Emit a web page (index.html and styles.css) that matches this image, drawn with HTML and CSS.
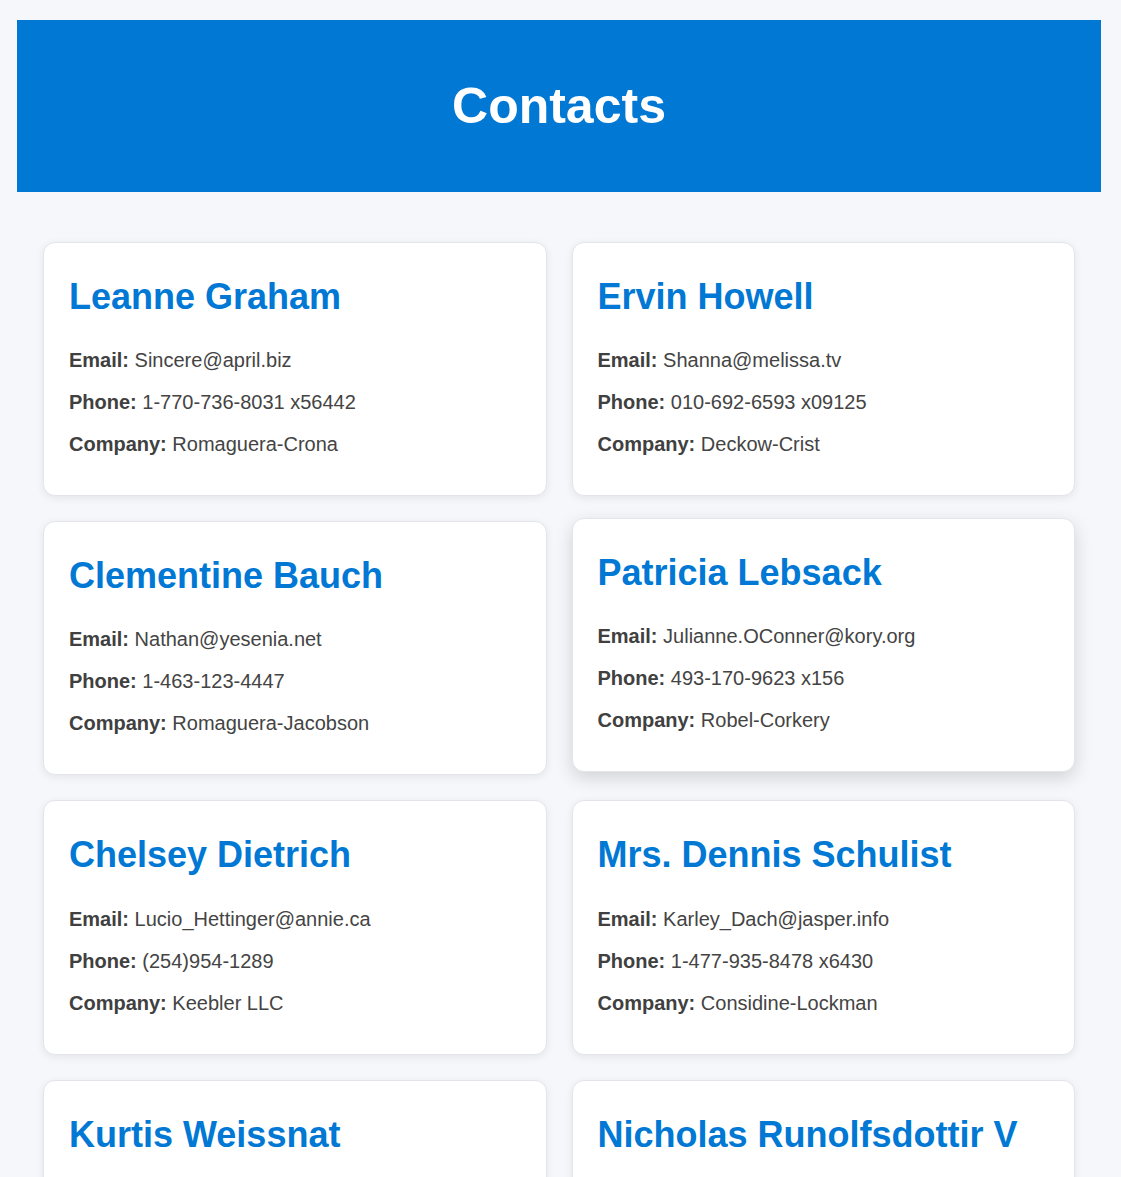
FILE: index.html
```html
<!DOCTYPE html>
<html lang="en">
<head>
<meta charset="utf-8">
<title>Contacts</title>
<link rel="stylesheet" href="styles.css">
</head>
<body>
<div class="page">
  <header class="banner">
    <h1 class="banner-title">Contacts</h1>
  </header>
  <main class="contacts">
    <article class="card">
      <h2 class="card-name">Leanne Graham</h2>
      <p class="card-line"><strong>Email:</strong> Sincere@april.biz</p>
      <p class="card-line"><strong>Phone:</strong> 1-770-736-8031 x56442</p>
      <p class="card-line"><strong>Company:</strong> Romaguera-Crona</p>
    </article>
    <article class="card">
      <h2 class="card-name">Ervin Howell</h2>
      <p class="card-line"><strong>Email:</strong> Shanna@melissa.tv</p>
      <p class="card-line"><strong>Phone:</strong> 010-692-6593 x09125</p>
      <p class="card-line"><strong>Company:</strong> Deckow-Crist</p>
    </article>
    <article class="card">
      <h2 class="card-name">Clementine Bauch</h2>
      <p class="card-line"><strong>Email:</strong> Nathan@yesenia.net</p>
      <p class="card-line"><strong>Phone:</strong> 1-463-123-4447</p>
      <p class="card-line"><strong>Company:</strong> Romaguera-Jacobson</p>
    </article>
    <article class="card card-raised">
      <h2 class="card-name">Patricia Lebsack</h2>
      <p class="card-line"><strong>Email:</strong> Julianne.OConner@kory.org</p>
      <p class="card-line"><strong>Phone:</strong> 493-170-9623 x156</p>
      <p class="card-line"><strong>Company:</strong> Robel-Corkery</p>
    </article>
    <article class="card">
      <h2 class="card-name">Chelsey Dietrich</h2>
      <p class="card-line"><strong>Email:</strong> Lucio_Hettinger@annie.ca</p>
      <p class="card-line"><strong>Phone:</strong> (254)954-1289</p>
      <p class="card-line"><strong>Company:</strong> Keebler LLC</p>
    </article>
    <article class="card">
      <h2 class="card-name">Mrs. Dennis Schulist</h2>
      <p class="card-line"><strong>Email:</strong> Karley_Dach@jasper.info</p>
      <p class="card-line"><strong>Phone:</strong> 1-477-935-8478 x6430</p>
      <p class="card-line"><strong>Company:</strong> Considine-Lockman</p>
    </article>
    <article class="card">
      <h2 class="card-name">Kurtis Weissnat</h2>
      <p class="card-line"><strong>Email:</strong> Telly.Hoeger@billy.biz</p>
      <p class="card-line"><strong>Phone:</strong> 210.067.6132</p>
      <p class="card-line"><strong>Company:</strong> Johns Group</p>
    </article>
    <article class="card">
      <h2 class="card-name">Nicholas Runolfsdottir V</h2>
      <p class="card-line"><strong>Email:</strong> Sherwood@rosamond.me</p>
      <p class="card-line"><strong>Phone:</strong> 586.493.6943 x140</p>
      <p class="card-line"><strong>Company:</strong> Abernathy Group</p>
    </article>
    <article class="card">
      <h2 class="card-name">Glenna Reichert</h2>
      <p class="card-line"><strong>Email:</strong> Chaim_McDermott@dana.io</p>
      <p class="card-line"><strong>Phone:</strong> (775)976-6794 x41206</p>
      <p class="card-line"><strong>Company:</strong> Yost and Sons</p>
    </article>
    <article class="card">
      <h2 class="card-name">Clementina DuBuque</h2>
      <p class="card-line"><strong>Email:</strong> Rey.Padberg@karina.biz</p>
      <p class="card-line"><strong>Phone:</strong> 024-648-3804</p>
      <p class="card-line"><strong>Company:</strong> Hoeger LLC</p>
    </article>
  </main>
</div>
</body>
</html>
```

FILE: styles.css
```css
html, body {
  margin: 0;
  padding: 0;
  background: #f5f7fb;
}

body {
  font-family: "Liberation Sans", Arial, sans-serif;
  font-size: 20px;
  line-height: 1.6;
  color: #444444;
}

.page {
  padding: 20px 20px 0 17px;
}

.banner {
  background: #0078d4;
  padding: 46px 20px;
  text-align: center;
}

.banner-title {
  margin: 0;
  font-size: 50px;
  font-weight: 700;
  line-height: 80px;
  color: #ffffff;
}

.contacts {
  display: grid;
  grid-template-columns: 1fr 1fr;
  gap: 25px;
  padding: 50px 26px 26px;
}

.card {
  background: #ffffff;
  border: 1px solid #e3e5ea;
  border-radius: 12px;
  padding: 25px;
  box-shadow: 0 2px 8px rgba(0, 0, 0, 0.08);
}

.card-raised {
  transform: translateY(-3px);
  box-shadow: 0 6px 18px rgba(0, 0, 0, 0.15);
}

.card-name {
  margin: 0 0 18.6px;
  font-size: 36px;
  font-weight: 700;
  line-height: 1.6;
  color: #0078d4;
}

.card-line {
  margin: 10px 0;
  line-height: 32px;
}

.card-line strong {
  color: #404040;
}
```
